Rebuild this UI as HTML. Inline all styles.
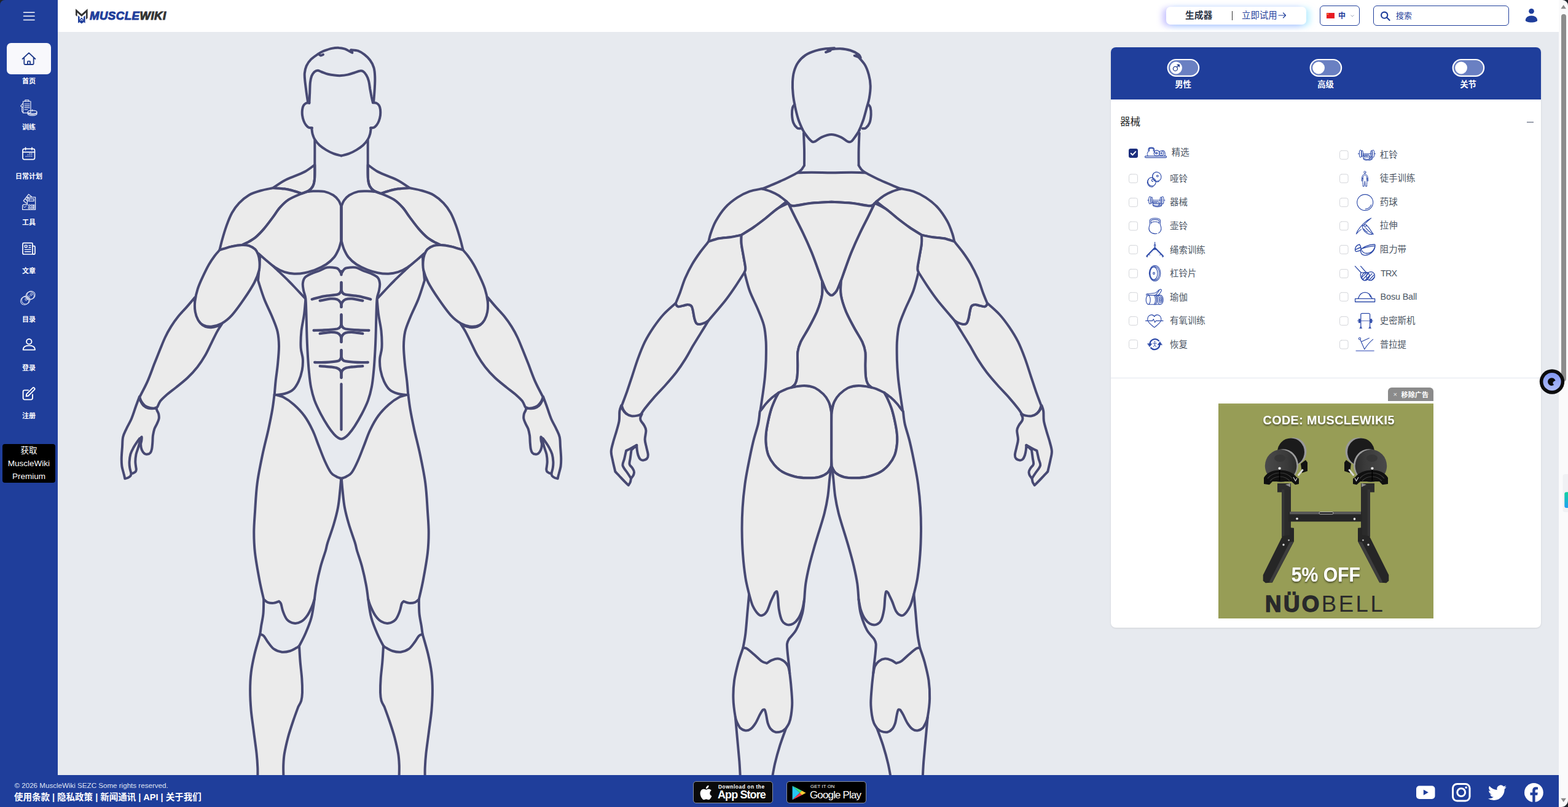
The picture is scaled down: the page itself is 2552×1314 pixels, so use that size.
<!DOCTYPE html>
<html lang="zh"><head><meta charset="utf-8"><title>MuscleWiki</title>
<style>
*{box-sizing:border-box;margin:0;padding:0}
html,body{width:2552px;height:1314px;overflow:hidden;background:#e7eaef;font-family:"Liberation Sans","Noto Sans CJK SC",sans-serif;}
body{position:relative}
.abs{position:absolute}
#sidebar{left:0;top:0;width:94px;height:1314px;background:#1f3e9b}
#header{left:94px;top:0;width:2443px;height:52px;background:#fff}
#footer{left:0;top:1262px;width:2537px;height:52px;background:#1f3e9b}
#scroll{left:2537px;top:0;width:15px;height:1314px;background:#fafafb}
#thumb{left:2540.500px;top:23px;width:8.500px;height:598px;background:#8c8c8c;border-radius:4.500px}
.nav{left:0;width:94px;text-align:center;color:#fff;font-size:11px;font-weight:bold;line-height:13px}
.ml{fill:none;stroke:#474973;stroke-width:4;stroke-linecap:round;stroke-linejoin:round}
.mf{fill:#ebebeb;stroke:#474973;stroke-width:4;stroke-linecap:round;stroke-linejoin:round}
#panel{left:1808px;top:77px;width:700px;height:945px;background:#fff;border-radius:8px;box-shadow:0 1px 3px rgba(0,0,0,.10);overflow:hidden}
#phead{left:0;top:0;width:700px;height:85px;background:#1f3e9b}
.lb{font-size:14.4px;line-height:20px;color:#4b5563;white-space:nowrap}
</style></head><body>
<svg class="abs" style="left:0;top:0" width="2552" height="1314" viewBox="0 0 2552 1314">
<g id="fhf">
<path class="mf" d="M420.0 456.7C421.7 461.7 426.1 476.7 430.0 486.7C433.9 496.7 439.7 507.8 443.3 516.7C446.9 525.6 449.9 532.2 451.7 540.0C453.4 547.8 453.9 554.4 454.0 563.3C454.1 572.2 452.9 583.9 452.0 593.3C451.1 602.8 449.6 611.7 448.7 620.0C447.8 628.3 447.0 639.4 446.7 643.3C449.4 642.9 458.3 642.5 463.3 641.0C468.4 639.5 473.1 637.9 476.8 634.5C480.6 631.2 483.5 626.1 486.0 620.8C488.4 615.5 490.5 608.7 491.7 602.6C492.8 596.5 493.2 590.4 492.8 584.3C492.5 578.2 490.0 573.7 489.6 566.1C489.2 558.4 489.6 547.8 490.5 538.7C491.5 529.5 494.0 520.0 495.1 511.3C496.2 502.6 497.0 490.7 497.4 486.6C495.1 484.2 488.3 476.9 483.7 472.0C479.1 467.2 476.2 463.8 470.0 457.7C463.8 451.5 454.4 442.7 446.7 435.3C438.9 427.9 427.2 417.0 423.3 413.3L423.3 412.7C423.2 415.6 422.9 422.7 422.3 430.0C421.8 437.3 420.4 452.2 420.0 456.7Z"/>
<path class="mf" d="M512.3 268.3C509.9 270.1 502.7 275.7 497.6 278.7C492.5 281.6 487.5 283.4 481.7 285.9C475.9 288.4 469.2 290.5 462.9 293.9C456.6 297.2 447.2 304.1 444.1 306.1C447.2 306.4 457.1 306.7 462.9 307.6C468.7 308.4 474.1 309.9 478.8 311.2C483.5 312.5 489.0 314.5 491.1 315.1C492.9 314.4 498.9 312.7 501.9 310.8C504.9 308.8 507.5 306.4 509.1 303.3C510.8 300.1 511.5 297.5 512.0 291.7C512.6 285.9 512.3 272.2 512.3 268.3Z"/>
<path class="mf" d="M444.1 306.1C440.7 306.9 430.4 308.6 423.9 310.5C417.3 312.4 410.8 314.3 405.1 317.7C399.3 321.1 393.7 325.9 389.2 330.7C384.6 335.5 381.0 340.6 377.6 346.6C374.2 352.6 371.6 359.6 368.9 366.9C366.3 374.1 363.6 383.2 361.7 390.0C359.8 396.7 358.1 404.5 357.3 407.3C360.5 406.4 370.1 403.0 376.1 401.6C382.2 400.2 390.6 399.4 393.5 399.0C394.9 398.3 398.6 397.0 402.2 395.1C405.8 393.1 410.6 390.8 415.2 387.1C419.8 383.4 424.8 378.2 429.6 372.6C434.5 367.1 439.8 359.6 444.1 353.9C448.4 348.1 451.3 342.8 455.7 337.9C460.0 333.1 464.2 328.7 470.1 324.9C476.0 321.1 487.6 316.7 491.1 315.1C489.0 314.5 483.5 312.5 478.8 311.2C474.1 309.9 468.7 308.4 462.9 307.6C457.1 306.7 447.2 306.4 444.1 306.1Z"/>
<path class="mf" d="M491.1 315.1C492.9 314.6 498.2 312.6 501.9 311.9C505.7 311.3 509.1 311.2 513.5 311.2C517.8 311.2 523.1 310.8 527.9 311.9C532.8 313.0 538.5 315.3 542.4 317.7C546.3 320.1 549.0 323.5 551.1 326.4C553.2 329.3 554.4 333.6 555.1 335.1L555.1 392.9C554.4 395.1 552.9 401.6 551.1 405.9C549.2 410.2 547.2 414.8 543.8 418.9C540.5 423.0 535.9 427.1 530.8 430.5C525.8 433.8 519.3 436.9 513.5 439.1C507.7 441.4 501.9 443.1 496.1 444.2C490.4 445.3 484.3 445.9 478.8 445.7C473.2 445.4 468.2 444.6 462.9 442.8C457.6 441.0 452.0 438.1 447.0 434.8C441.9 431.6 437.0 427.0 432.5 423.2C428.1 419.5 422.3 414.2 420.2 412.4L420.2 414.6C419.4 413.1 417.7 408.3 415.2 405.9C412.6 403.5 408.7 401.3 405.1 400.1C401.4 399.0 395.4 399.2 393.5 399.0C394.9 398.3 398.6 397.0 402.2 395.1C405.8 393.1 410.6 390.8 415.2 387.1C419.8 383.4 424.8 378.2 429.6 372.6C434.5 367.1 439.8 359.6 444.1 353.9C448.4 348.1 451.3 342.8 455.7 337.9C460.0 333.1 464.2 328.7 470.1 324.9C476.0 321.1 487.6 316.7 491.1 315.1Z"/>
<path class="mf" d="M317.4 484.0C315.2 486.6 308.5 494.6 303.9 499.9C299.2 505.3 293.7 510.6 289.5 515.9C285.2 521.2 281.7 526.3 278.3 531.9C274.8 537.5 271.6 543.3 268.7 549.5C265.8 555.6 263.6 561.5 260.7 568.6C257.8 575.8 254.6 583.8 251.1 592.6C247.7 601.4 243.9 612.4 239.9 621.4C235.9 630.4 229.3 642.4 227.2 646.6C227.7 647.9 228.9 651.8 230.4 654.1C231.8 656.4 233.6 658.8 235.9 660.5C238.3 662.2 242.1 663.5 244.7 664.2C247.4 664.9 250.0 664.8 251.9 664.5C253.8 664.2 255.5 662.9 256.2 662.6C257.0 661.0 258.4 656.5 260.7 653.3C263.1 650.2 266.0 647.5 270.3 643.7C274.6 640.0 280.4 635.7 286.3 631.0C292.1 626.2 299.6 620.6 305.4 615.0C311.3 609.4 316.6 603.5 321.4 597.4C326.2 591.3 330.5 584.6 334.2 578.2C337.9 571.8 340.6 565.4 343.8 559.1C347.0 552.7 350.5 545.2 353.4 539.9C356.3 534.6 360.0 529.2 361.4 527.1C360.0 527.8 356.3 530.1 353.4 531.1C350.5 532.1 347.0 533.0 343.8 533.2C340.6 533.3 337.1 533.0 334.2 531.9C331.3 530.8 328.5 529.0 326.2 526.3C324.0 523.6 322.0 519.8 320.6 515.9C319.2 512.1 318.5 507.1 317.9 503.1C317.3 499.1 317.2 495.1 317.1 492.0C317.0 488.8 317.4 485.3 317.4 484.0Z"/>
<path class="mf" d="M357.3 407.3C360.5 406.4 370.1 403.0 376.1 401.6C382.2 400.2 388.7 399.2 393.5 399.0C398.3 398.7 401.4 399.0 405.1 400.1C408.7 401.3 412.6 403.5 415.2 405.9C417.7 408.3 419.0 411.2 420.2 414.6C421.4 417.9 422.2 421.9 422.4 426.1C422.6 430.4 423.1 434.4 421.7 440.0C420.3 445.7 418.1 452.2 414.0 460.0C409.9 467.8 403.4 477.8 397.3 486.7C391.2 495.6 383.4 506.7 377.3 513.3C371.2 520.0 366.2 523.6 360.7 526.7C355.1 529.7 349.0 531.2 344.0 531.7C339.0 532.1 334.3 531.2 330.7 529.3C327.1 527.5 324.5 524.3 322.3 520.7C320.2 517.0 318.5 512.3 317.7 507.3C316.8 502.3 316.7 496.8 317.3 490.7C318.0 484.6 319.6 477.3 321.7 470.7C323.8 464.0 326.9 457.3 330.0 450.7C333.1 444.0 336.8 436.3 340.0 430.7C343.2 425.0 346.4 420.6 349.3 416.7C352.2 412.8 356.0 408.9 357.3 407.3Z"/>
<path class="mf" d="M227.0 645.8C226.1 648.3 223.7 654.6 221.5 660.5C219.4 666.3 216.9 674.9 214.2 681.2C211.6 687.5 208.0 693.1 205.7 698.2C203.4 703.3 201.3 706.7 200.2 711.6C199.1 716.5 199.4 721.8 199.0 727.4C198.6 733.1 197.9 740.4 197.8 745.7C197.7 751.0 197.8 754.8 198.4 759.1C199.0 763.4 200.6 767.9 201.4 771.3C202.3 774.6 203.0 777.9 203.3 779.2C204.1 779.0 206.6 778.7 208.1 778.0C209.7 777.3 211.5 776.1 212.4 774.9C213.3 773.8 213.4 771.9 213.6 771.3C214.2 771.1 216.1 770.7 217.3 770.1C218.5 769.5 220.2 768.7 220.9 767.6C221.7 766.6 221.6 764.6 221.8 764.0C221.5 762.0 220.4 755.9 220.3 751.8C220.3 747.7 220.8 743.3 221.5 739.6C222.3 736.0 223.7 732.9 224.6 729.9C225.5 726.8 226.5 723.8 227.0 721.4C227.6 718.9 227.7 716.3 227.9 715.3C228.3 714.6 230.3 711.0 230.7 711.4C231.1 711.8 230.6 715.6 230.3 717.7C230.0 719.8 229.0 721.4 229.1 723.8C229.2 726.2 229.7 729.9 230.7 732.3C231.7 734.8 233.4 737.2 234.9 738.4C236.5 739.6 238.2 739.8 239.8 739.6C241.4 739.4 243.5 738.6 244.7 737.2C245.9 735.8 246.5 733.9 247.1 731.1C247.7 728.3 248.0 723.8 248.3 720.1C248.6 716.5 248.4 712.8 248.9 709.2C249.5 705.5 250.3 701.5 251.4 698.2C252.5 695.0 254.4 692.5 255.6 689.7C256.9 686.8 258.3 683.8 258.7 681.2C259.1 678.5 258.6 676.0 258.1 673.8C257.5 671.7 256.0 669.5 255.4 668.0C254.8 666.5 254.8 665.3 254.7 664.7C253.6 664.8 250.6 665.3 248.3 665.3C246.1 665.3 243.5 665.5 241.0 664.7C238.6 663.9 235.8 662.4 233.7 660.5C231.7 658.5 230.0 655.6 228.8 653.1C227.7 650.7 227.3 647.1 227.0 645.8Z"/>
<path class="mf" d="M446.7 641.7C446.1 645.8 445.0 656.9 443.3 666.7C441.7 676.4 439.3 687.8 436.7 700.0C434.0 712.2 430.3 725.6 427.3 740.0C424.3 754.4 420.7 771.1 418.7 786.7C416.6 802.2 415.9 820.0 415.0 833.3C414.1 846.7 413.3 855.6 413.3 866.7C413.3 877.8 413.5 886.8 415.0 900.0C416.5 913.2 420.2 933.4 422.6 946.1C425.0 958.7 428.1 970.8 429.2 975.8C430.3 976.6 433.1 979.8 435.8 980.8C438.6 981.8 442.7 982.0 445.7 981.8C448.7 981.5 452.6 979.5 454.0 979.1C454.5 979.8 456.2 980.3 457.3 983.1C458.4 985.8 458.9 991.3 460.6 995.6C462.2 999.9 464.2 1005.6 467.2 1008.8C470.2 1012.0 474.9 1014.2 478.8 1014.8C482.6 1015.3 486.7 1014.2 490.3 1012.1C493.9 1010.1 497.3 1006.4 500.2 1002.2C503.1 998.1 505.9 991.8 507.8 987.4C509.8 983.0 511.1 977.7 511.8 975.8C512.3 972.0 513.4 961.5 515.1 952.7C516.7 943.9 519.2 932.3 521.7 922.9C524.2 913.6 528.0 903.1 530.0 896.5C531.9 889.9 531.1 890.5 533.3 883.3C535.6 876.1 540.6 862.8 543.3 853.3C546.1 843.9 548.3 835.6 550.0 826.7C551.7 817.8 552.5 808.0 553.3 800.0C554.2 792.0 554.9 782.2 555.2 778.7C554.6 778.6 553.4 778.5 552.0 778.0C550.6 777.5 549.2 777.2 547.0 775.8C544.8 774.4 541.7 773.9 538.7 769.7C535.6 765.5 532.0 758.0 528.7 750.7C525.3 743.3 522.0 734.1 518.7 725.7C515.3 717.3 512.6 708.4 508.7 700.3C504.8 692.2 500.4 683.9 495.3 677.0C490.3 670.1 483.9 663.7 478.3 658.7C472.7 653.7 466.9 649.7 461.7 647.0C456.4 644.3 449.2 643.1 446.7 642.3Z"/>
<path class="mf" d="M423.3 1032.6C421.8 1038.0 416.8 1054.7 414.3 1065.0C411.9 1075.4 409.9 1084.8 408.7 1094.7C407.5 1104.6 407.1 1114.0 407.1 1124.5C407.1 1134.9 407.7 1145.9 408.7 1157.5C409.8 1169.1 411.9 1182.3 413.3 1193.8C414.8 1205.4 416.6 1217.5 417.6 1226.9C418.6 1236.2 419.0 1242.8 419.3 1250.0C419.6 1257.2 419.3 1266.5 419.3 1269.8L461.6 1269.8C461.5 1266.0 461.0 1253.9 461.2 1246.7C461.5 1239.5 461.6 1234.6 462.9 1226.9C464.2 1219.2 466.5 1209.3 468.8 1200.4C471.2 1191.6 474.3 1182.3 477.1 1174.0C479.9 1165.8 484.0 1154.7 485.4 1150.9C486.2 1149.2 489.2 1144.8 490.3 1141.0C491.4 1137.1 491.8 1133.8 492.0 1127.8C492.1 1121.7 491.9 1112.9 491.3 1104.6C490.8 1096.4 489.4 1087.0 488.7 1078.2C487.9 1069.4 487.3 1056.2 487.0 1051.8C486.2 1052.3 484.5 1053.7 482.1 1055.1C479.6 1056.5 476.0 1058.9 472.1 1060.0C468.3 1061.1 463.3 1062.2 458.9 1061.7C454.5 1061.1 449.6 1059.5 445.7 1056.7C441.9 1054.0 438.6 1048.8 435.8 1045.2C433.1 1041.6 431.3 1037.4 429.2 1035.3C427.1 1033.2 424.2 1033.1 423.3 1032.6Z"/>
</g>
<use href="#fhf" transform="matrix(-1 0 0 1 1111.0 0)"/>
<path class="mf" d="M555.5 445.6C554.8 444.4 552.5 440.3 551.0 438.7C549.5 437.2 549.8 436.7 546.7 436.2C543.6 435.7 536.6 434.8 532.3 435.5C528.0 436.2 525.0 438.8 520.7 440.5C516.3 442.3 510.4 443.8 506.3 445.8C502.2 447.7 498.3 449.4 496.0 452.2C493.8 454.9 493.1 458.6 492.8 462.2C492.5 465.8 493.4 469.6 494.2 473.6C495.0 477.6 496.7 479.9 497.4 486.2C498.1 492.5 498.2 502.5 498.5 511.3C498.8 520.0 499.0 530.7 499.2 538.7C499.4 546.7 499.6 552.3 499.9 559.2C500.2 566.1 500.5 572.3 501.0 580.0C501.5 587.6 502.0 596.7 502.9 605.1C503.7 613.4 504.5 622.3 506.1 630.2C507.6 638.0 509.3 644.8 512.0 652.1C514.7 659.4 518.4 666.8 522.0 673.8C525.6 680.7 530.1 688.3 533.7 693.8C537.3 699.4 540.9 703.9 543.7 707.1C546.5 710.3 548.6 711.7 550.6 713.0C552.5 714.3 553.9 714.8 555.5 714.8C557.1 714.8 558.5 714.3 560.4 713.0C562.4 711.7 564.5 710.3 567.3 707.1C570.1 703.9 573.7 699.4 577.3 693.8C580.9 688.3 585.4 680.7 589.0 673.8C592.6 666.8 596.3 659.4 599.0 652.1C601.7 644.8 603.4 638.0 604.9 630.2C606.5 622.3 607.3 613.4 608.1 605.1C609.0 596.7 609.5 587.6 610.0 580.0C610.5 572.3 610.8 566.1 611.1 559.2C611.4 552.3 611.6 546.7 611.8 538.7C612.0 530.7 612.2 520.0 612.5 511.3C612.8 502.5 612.9 492.5 613.6 486.2C614.3 479.9 616.0 477.6 616.8 473.6C617.6 469.6 618.5 465.8 618.2 462.2C617.9 458.6 617.2 454.9 615.0 452.2C612.7 449.4 608.8 447.7 604.7 445.8C600.6 443.8 594.7 442.3 590.3 440.5C586.0 438.8 583.0 436.2 578.7 435.5C574.4 434.8 567.4 435.7 564.3 436.2C561.2 436.7 561.5 437.2 560.0 438.7C558.5 440.3 556.2 444.4 555.5 445.6Z"/>
<g id="fhl">
<path class="ml" d="M512.3 228.3C512.3 233.6 512.4 249.4 512.3 260.0C512.3 270.6 512.6 284.5 512.0 291.7C511.5 298.9 510.8 300.1 509.1 303.3C507.5 306.4 504.9 308.8 501.9 310.8C498.9 312.7 492.9 314.4 491.1 315.1"/>
<path class="ml" d="M213.6 771.3C213.2 769.7 211.7 764.8 211.2 761.5C210.7 758.3 210.4 755.5 210.6 751.8C210.8 748.1 211.4 743.3 212.4 739.6C213.4 736.0 214.9 733.1 216.7 729.9C218.4 726.6 221.0 722.8 222.8 720.1C224.5 717.5 226.6 714.9 227.4 713.8"/>
<path class="ml" d="M429.2 975.8C429.1 979.7 429.2 991.8 428.5 998.9C427.9 1006.1 426.1 1013.1 425.2 1018.8C424.4 1024.4 423.6 1030.3 423.3 1032.6"/>
<path class="ml" d="M511.8 975.8C511.0 980.8 509.3 996.2 506.8 1005.5C504.4 1014.9 500.2 1024.3 496.9 1032.0C493.6 1039.7 488.7 1048.5 487.0 1051.8"/>
</g>
<use href="#fhl" transform="matrix(-1 0 0 1 1111.0 0)"/>
<path class="ml" d="M501.1 166.5C500.7 163.9 499.6 156.8 498.8 151.2C498.1 145.7 497.1 138.3 496.5 133.0C496.0 127.6 495.4 123.6 495.8 119.3C496.2 115.0 497.1 110.9 498.8 107.1C500.6 103.3 503.1 99.7 506.4 96.4C509.7 93.1 516.6 88.8 518.6 87.3C519.1 87.8 520.4 90.1 521.7 90.4C522.9 90.6 525.2 89.1 525.9 88.8"/>
<path class="ml" d="M520.1 86.5C521.4 85.9 524.5 84.0 527.8 82.7C531.0 81.5 535.9 79.7 539.9 78.9C544.0 78.1 548.6 77.7 552.1 77.9C555.7 78.0 558.4 78.8 561.2 79.7C564.0 80.6 566.8 82.5 568.8 83.5C570.9 84.5 572.7 85.4 573.4 85.8L571.1 81.2C573.0 81.5 578.9 81.5 582.5 82.7C586.2 84.0 589.9 86.3 593.2 88.8C596.5 91.4 599.8 94.4 602.3 98.0C604.9 101.5 607.1 105.8 608.4 110.1C609.7 114.5 610.0 118.5 610.2 123.8C610.5 129.2 610.3 135.0 609.9 142.1C609.6 149.2 608.4 162.4 608.1 166.5"/>
<path class="ml" d="M503.4 168.0C503.5 165.2 503.9 156.8 504.2 151.2C504.4 145.7 504.4 139.1 504.9 134.5C505.4 129.9 506.1 126.8 507.2 123.8C508.3 120.9 510.1 118.5 511.8 117.0C513.4 115.5 515.2 114.7 517.1 114.7C519.0 114.7 520.4 116.0 523.2 117.0C526.0 118.0 530.3 119.9 533.8 120.8C537.4 121.7 540.9 122.2 544.5 122.6C548.0 123.0 551.6 123.3 555.1 123.1C558.7 122.9 562.3 122.3 565.8 121.6C569.4 120.8 573.2 119.5 576.5 118.5C579.8 117.5 583.2 115.8 585.6 115.5C588.0 115.1 589.1 115.1 590.9 116.2C592.7 117.4 594.7 119.8 596.2 122.3C597.8 124.9 599.0 127.6 600.0 131.4C601.1 135.3 601.6 140.8 602.3 145.1C603.1 149.5 603.9 153.6 604.6 157.3C605.4 161.0 606.5 165.6 606.9 167.2"/>
<path class="ml" d="M503.4 167.2C502.5 167.3 499.6 167.2 498.1 168.0C496.5 168.7 495.0 170.0 494.0 171.8C492.9 173.6 492.3 176.0 492.0 178.6C491.7 181.3 491.6 184.7 492.0 187.8C492.4 190.8 493.3 194.2 494.3 196.9C495.3 199.6 496.7 202.0 498.1 203.7C499.5 205.5 501.0 206.8 502.6 207.6C504.3 208.3 507.1 208.2 508.0 208.3"/>
<path class="ml" d="M607.6 167.2C608.5 167.3 611.4 167.2 612.9 168.0C614.5 168.7 616.0 170.0 617.0 171.8C618.1 173.6 618.7 176.0 619.0 178.6C619.3 181.3 619.4 184.7 619.0 187.8C618.6 190.8 617.7 194.2 616.7 196.9C615.7 199.6 614.3 202.0 612.9 203.7C611.5 205.5 610.0 206.8 608.4 207.6C606.7 208.3 603.9 208.2 603.0 208.3"/>
<path class="ml" d="M507.2 208.3C507.5 210.0 507.8 215.0 508.7 218.2C509.6 221.4 510.6 224.3 512.5 227.3C514.4 230.4 517.1 233.7 520.1 236.5C523.2 239.3 527.0 241.8 530.8 244.1C534.6 246.4 538.9 248.6 543.0 250.2C547.0 251.7 553.1 253.0 555.1 253.5"/>
<path class="ml" d="M603.8 208.3C603.5 210.0 603.2 215.0 602.3 218.2C601.4 221.4 600.4 224.3 598.5 227.3C596.6 230.4 593.9 233.7 590.9 236.5C587.8 239.3 584.0 241.8 580.2 244.1C576.4 246.4 572.1 248.6 568.0 250.2C564.0 251.7 557.9 253.0 555.9 253.5"/>
<g id="fha" style="stroke-width:4.3">
<path class="ml" style="stroke-width:4.3" d="M555.5 459.9C555.5 461.8 555.8 468.6 555.5 471.3C555.2 474.1 554.8 475.0 553.7 476.4C552.5 477.7 553.1 478.6 548.7 479.6C544.2 480.6 533.9 481.0 527.1 482.3C520.2 483.6 510.9 486.5 507.7 487.3"/>
<path class="ml" style="stroke-width:4.3" d="M520.7 489.6C523.6 489.1 533.8 486.8 538.5 486.4C543.1 486.1 546.2 486.6 548.7 487.5C551.3 488.5 552.8 490.4 553.9 491.9C555.0 493.4 555.2 495.1 555.5 496.4C555.8 497.8 555.5 499.3 555.5 499.9"/>
<path class="ml" style="stroke-width:4.3" d="M555.5 512.4C555.5 514.9 555.8 523.9 555.5 527.3C555.2 530.6 554.8 530.9 553.7 532.3C552.5 533.6 553.1 534.6 548.7 535.5C544.2 536.3 533.4 537.1 527.1 537.5C520.7 537.9 513.4 537.9 510.6 538.0"/>
<path class="ml" style="stroke-width:4.3" d="M520.7 543.2C523.6 542.9 533.8 541.1 538.5 540.9C543.1 540.8 546.2 541.2 548.7 542.1C551.3 543.0 552.8 544.7 553.9 546.2C555.0 547.7 555.2 549.4 555.5 551.2C555.8 553.0 555.5 556.0 555.5 556.9"/>
<path class="ml" style="stroke-width:4.3" d="M555.5 570.2C555.5 571.8 555.8 577.7 555.5 580.2C555.2 582.7 554.8 583.9 553.7 585.2C552.5 586.6 552.7 587.4 548.7 588.2C544.6 589.0 535.4 589.7 529.3 590.0C523.3 590.3 515.1 590.0 512.2 590.0"/>
<path class="ml" style="stroke-width:4.3" d="M520.7 596.2C523.6 596.4 533.8 597.0 538.5 597.5C543.1 598.1 546.2 598.4 548.7 599.4C551.3 600.3 552.8 601.8 553.9 603.2C555.0 604.7 555.2 606.3 555.5 608.3C555.8 610.2 555.5 614.0 555.5 615.1"/>
</g>
<use href="#fha" transform="matrix(-1 0 0 1 1111.0 0)"/>
<path class="ml" style="stroke-width:4.3" d="M555.5 625.4L555.5 699.6"/>
<path class="ml" style="stroke-width:4.3" d="M555.5 441.7L555.5 447.4"/>
<g id="bhf">
<path class="mf" d="M1240.0 307.3C1236.7 308.1 1226.7 309.3 1220.0 311.7C1213.3 314.1 1206.7 317.2 1200.0 321.7C1193.3 326.1 1185.8 331.9 1180.0 338.3C1174.2 344.7 1168.9 353.1 1165.0 360.0C1161.1 366.9 1158.6 374.4 1156.7 380.0C1154.7 385.6 1153.9 391.1 1153.3 393.3C1156.1 392.5 1163.9 389.6 1170.0 388.3C1176.1 387.1 1183.9 386.9 1190.0 386.0C1196.1 385.1 1203.9 383.2 1206.7 382.7C1210.0 380.6 1220.0 374.6 1226.7 370.0C1233.3 365.4 1240.3 360.0 1246.7 355.0C1253.1 350.0 1259.4 344.4 1265.0 340.0C1270.6 335.6 1277.5 330.3 1280.0 328.3C1278.3 326.7 1273.9 321.3 1270.0 318.3C1266.1 315.4 1261.7 312.5 1256.7 310.7C1251.7 308.8 1242.8 307.9 1240.0 307.3Z"/>
<path class="mf" d="M1099.9 493.6C1096.5 496.6 1085.9 505.4 1079.9 512.0C1073.9 518.5 1069.0 525.3 1063.9 532.7C1058.8 540.2 1053.8 548.2 1049.5 556.7C1045.3 565.2 1041.8 574.5 1038.3 583.9C1034.9 593.2 1031.7 603.8 1028.8 612.6C1025.8 621.4 1023.6 628.6 1020.8 636.6C1018.0 644.6 1013.4 656.5 1012.0 660.5C1012.5 661.9 1013.4 666.0 1015.2 668.5C1016.9 671.1 1019.7 674.0 1022.4 675.7C1025.0 677.4 1028.5 678.6 1031.2 678.9C1033.8 679.2 1036.3 678.1 1038.3 677.3C1040.4 676.5 1042.6 674.7 1043.5 674.1C1044.5 672.7 1046.1 669.7 1049.5 665.3C1052.9 660.9 1058.3 654.1 1063.9 647.8C1069.5 641.4 1077.0 633.9 1083.1 627.0C1089.2 620.1 1095.3 613.1 1100.7 606.2C1106.0 599.3 1110.5 592.6 1115.0 585.4C1119.6 578.3 1123.6 570.3 1127.8 563.1C1132.1 555.9 1136.3 549.2 1140.6 542.3C1144.9 535.4 1151.2 525.0 1153.4 521.5C1152.3 522.2 1149.4 524.5 1147.0 525.5C1144.6 526.6 1141.3 527.8 1139.0 527.9C1136.7 528.1 1134.9 527.9 1133.4 526.3C1131.9 524.7 1131.1 521.8 1130.2 518.3C1129.3 514.9 1128.6 508.9 1127.8 505.6C1127.0 502.2 1126.8 500.0 1125.4 498.4C1124.1 496.8 1122.1 496.1 1119.8 496.0C1117.6 495.8 1114.5 497.0 1111.8 497.6C1109.2 498.1 1105.7 499.4 1103.9 499.2C1102.0 499.0 1101.3 497.4 1100.7 496.5C1100.0 495.5 1100.0 494.1 1099.9 493.6Z"/>
<path class="mf" d="M1153.3 393.3C1151.1 396.1 1144.4 403.9 1140.0 410.0C1135.6 416.1 1130.8 422.8 1126.7 430.0C1122.5 437.2 1118.3 445.6 1115.0 453.3C1111.7 461.1 1109.2 470.0 1106.7 476.7C1104.1 483.4 1101.0 490.8 1099.9 493.6C1100.0 494.1 1100.0 495.5 1100.7 496.5C1101.3 497.4 1102.0 499.0 1103.9 499.2C1105.7 499.4 1109.2 498.1 1111.8 497.6C1114.5 497.0 1117.6 495.8 1119.8 496.0C1122.1 496.1 1124.1 496.8 1125.4 498.4C1126.8 500.0 1127.0 502.2 1127.8 505.6C1128.6 508.9 1129.3 514.9 1130.2 518.3C1131.1 521.8 1131.9 524.7 1133.4 526.3C1134.9 527.9 1136.7 528.1 1139.0 527.9C1141.3 527.8 1144.6 526.6 1147.0 525.5C1149.4 524.5 1152.3 522.2 1153.4 521.5C1157.8 516.3 1172.8 499.1 1180.0 490.0C1187.2 480.9 1191.4 474.4 1196.7 466.7C1201.9 458.9 1209.2 447.2 1211.7 443.3C1211.9 442.2 1213.6 441.1 1213.3 436.7C1213.1 432.2 1211.1 423.3 1210.0 416.7C1208.9 410.0 1207.2 402.3 1206.7 396.7C1206.1 391.0 1206.7 385.0 1206.7 382.7C1203.9 383.2 1196.1 385.1 1190.0 386.0C1183.9 386.9 1176.1 387.1 1170.0 388.3C1163.9 389.6 1156.1 392.5 1153.3 393.3Z"/>
<path class="mf" d="M1011.2 660.2C1010.7 661.7 1009.0 665.2 1008.4 669.4C1007.8 673.5 1008.5 679.7 1007.7 685.2C1006.8 690.7 1004.9 696.4 1003.3 702.2C1001.6 708.1 999.2 715.0 997.8 720.5C996.4 726.0 994.8 730.3 994.7 735.1C994.6 740.0 996.1 744.3 997.2 749.8C998.3 755.2 1000.7 765.0 1001.4 768.0C1003.2 769.8 1008.2 775.3 1011.8 779.0C1015.3 782.7 1020.9 788.3 1022.8 790.2C1023.3 789.3 1025.1 786.9 1025.8 785.1C1026.5 783.2 1026.8 780.0 1027.0 779.0C1027.6 778.2 1029.8 775.9 1030.7 774.1C1031.5 772.3 1032.3 770.1 1032.0 768.0C1031.8 766.0 1030.3 764.0 1029.1 761.9C1027.9 759.9 1025.1 758.5 1024.6 755.8C1024.0 753.2 1025.3 750.0 1025.8 746.1C1026.3 742.2 1027.3 734.9 1027.6 732.7L1036.2 724.8C1036.3 726.1 1036.4 730.0 1036.8 732.7C1037.2 735.4 1037.7 738.7 1038.6 741.2C1039.5 743.8 1040.8 746.6 1042.2 747.9C1043.7 749.3 1045.3 749.6 1047.1 749.4C1048.9 749.1 1052.0 747.9 1053.2 746.3C1054.5 744.8 1054.9 743.1 1054.7 740.0C1054.5 736.9 1052.8 731.9 1052.0 727.8C1051.1 723.8 1049.7 720.1 1049.6 715.6C1049.5 711.2 1051.6 704.9 1051.4 701.0C1051.2 697.2 1049.7 695.1 1048.3 692.5C1047.0 689.9 1044.1 687.2 1043.1 685.2C1042.1 683.2 1042.0 682.1 1042.2 680.3C1042.5 678.5 1044.3 675.2 1044.7 674.2C1043.3 674.7 1039.0 676.4 1036.2 676.9C1033.3 677.4 1030.5 677.8 1027.6 677.3C1024.8 676.7 1021.4 675.3 1019.1 673.6C1016.8 671.9 1014.9 669.2 1013.6 666.9C1012.3 664.7 1011.6 661.3 1011.2 660.2Z"/>
<path class="mf" d="M1206.7 382.7C1210.0 380.6 1220.0 374.6 1226.7 370.0C1233.3 365.4 1240.3 360.0 1246.7 355.0C1253.1 350.0 1258.9 344.1 1265.0 340.0C1271.1 335.9 1280.0 332.2 1283.0 330.7C1284.8 334.4 1289.9 345.1 1294.0 353.3C1298.1 361.6 1302.9 370.6 1307.3 380.0C1311.8 389.4 1316.8 400.6 1320.7 410.0C1324.6 419.4 1327.8 428.8 1330.7 436.7C1333.6 444.6 1336.8 453.9 1338.0 457.3C1338.0 461.1 1339.3 471.8 1338.0 480.0C1336.7 488.2 1333.6 497.8 1330.0 506.7C1326.4 515.6 1321.1 525.0 1316.7 533.3C1312.2 541.7 1306.4 550.0 1303.3 556.7C1300.3 563.3 1299.2 566.7 1298.3 573.3C1297.5 580.0 1298.5 589.7 1298.3 596.7C1298.2 603.6 1298.0 610.3 1297.3 615.0C1296.7 619.7 1295.9 622.3 1294.3 625.0C1292.8 627.7 1289.1 630.0 1288.0 631.0C1285.6 632.1 1278.0 634.8 1273.3 637.3C1268.7 639.8 1264.4 642.3 1260.0 646.0C1255.6 649.7 1250.6 654.8 1246.7 659.3C1242.8 663.9 1238.3 671.0 1236.7 673.3C1237.5 667.8 1240.3 650.0 1241.7 640.0C1243.1 630.0 1244.2 622.2 1245.0 613.3C1245.8 604.4 1246.4 596.1 1246.7 586.7C1246.9 577.2 1247.2 566.1 1246.7 556.7C1246.1 547.2 1245.6 538.9 1243.3 530.0C1241.1 521.1 1237.2 512.8 1233.3 503.3C1229.4 493.9 1223.6 483.3 1220.0 473.3C1216.4 463.3 1213.1 448.3 1211.7 443.3C1211.9 442.2 1213.6 441.1 1213.3 436.7C1213.1 432.2 1211.1 423.3 1210.0 416.7C1208.9 410.0 1207.2 402.3 1206.7 396.7C1206.1 391.0 1206.7 385.0 1206.7 382.7Z"/>
<path class="mf" d="M1288.0 631.0C1289.2 630.6 1290.8 629.1 1295.0 628.7C1299.2 628.2 1307.5 627.7 1313.3 628.3C1319.2 629.0 1325.3 630.4 1330.0 632.7C1334.7 634.9 1338.4 637.9 1341.7 641.7C1344.9 645.4 1347.4 650.0 1349.3 655.0C1351.2 660.0 1352.5 668.9 1353.1 671.7C1353.2 675.3 1353.3 684.2 1353.3 693.3C1353.3 702.5 1353.3 717.8 1353.3 726.7C1353.3 735.6 1353.4 741.1 1353.3 746.7C1353.2 752.2 1352.9 757.8 1352.8 760.0L1352.7 760.0C1351.7 761.7 1349.9 767.2 1346.7 770.0C1343.4 772.8 1338.9 775.3 1333.3 776.7C1327.8 778.1 1320.0 778.4 1313.3 778.3C1306.7 778.2 1300.0 777.7 1293.3 776.0C1286.7 774.3 1278.9 771.6 1273.3 768.3C1267.8 765.1 1263.8 761.1 1260.0 756.7C1256.2 752.2 1252.9 747.2 1250.7 741.7C1248.4 736.1 1247.3 729.2 1246.7 723.3C1246.0 717.5 1246.1 712.8 1246.7 706.7C1247.2 700.6 1248.6 693.3 1250.0 686.7C1251.4 680.0 1253.1 672.8 1255.0 666.7C1256.9 660.6 1259.6 654.6 1261.7 650.0C1263.7 645.4 1266.4 641.1 1267.3 639.3C1269.4 638.3 1276.6 634.7 1280.0 633.3C1283.4 631.9 1286.7 631.4 1288.0 631.0Z"/>
<path class="mf" d="M1236.7 670.0C1236.2 673.3 1235.8 681.7 1234.0 690.0C1232.2 698.3 1228.4 708.3 1225.7 720.0C1222.9 731.7 1219.5 748.6 1217.3 760.0C1215.1 771.4 1213.9 777.4 1212.4 788.5C1210.9 799.6 1209.4 813.9 1208.6 826.6C1207.8 839.3 1207.5 851.9 1207.6 864.6C1207.7 877.3 1208.1 890.0 1209.1 902.7C1210.0 915.4 1211.6 929.9 1213.3 940.7C1215.0 951.5 1218.2 963.1 1219.2 967.5C1220.2 970.6 1222.5 980.5 1224.8 985.7C1227.2 990.9 1230.6 996.2 1233.1 998.9C1235.6 1001.7 1237.2 1002.8 1239.7 1002.2C1242.2 1001.7 1245.5 999.5 1248.0 995.6C1250.5 991.8 1252.4 984.2 1254.6 979.1C1256.8 974.0 1260.1 967.5 1261.2 965.2C1261.7 964.9 1263.7 962.0 1264.5 963.3C1265.3 964.5 1265.6 967.7 1266.1 972.5C1266.7 977.3 1266.7 986.0 1267.8 992.3C1268.9 998.7 1270.5 1006.4 1272.8 1010.5C1275.0 1014.6 1278.0 1016.3 1281.0 1017.1C1284.0 1017.9 1287.9 1017.1 1290.9 1015.4C1293.9 1013.8 1296.7 1011.0 1299.2 1007.2C1301.7 1003.3 1304.1 997.6 1305.8 992.3C1307.4 987.1 1308.5 978.6 1309.1 975.8C1309.5 971.5 1310.0 959.2 1311.3 950.2C1312.6 941.2 1314.8 931.2 1317.0 921.7C1319.2 912.2 1321.9 902.7 1324.6 893.2C1327.3 883.7 1330.3 874.1 1333.2 864.6C1336.1 855.1 1339.3 845.6 1341.7 836.1C1344.1 826.6 1346.0 817.1 1347.4 807.6C1348.8 798.1 1349.4 786.9 1350.3 779.0C1351.2 771.1 1352.3 763.2 1352.7 760.0C1351.7 761.7 1349.9 767.2 1346.7 770.0C1343.4 772.8 1338.9 775.3 1333.3 776.7C1327.8 778.1 1320.0 778.4 1313.3 778.3C1306.7 778.2 1300.0 777.7 1293.3 776.0C1286.7 774.3 1278.9 771.6 1273.3 768.3C1267.8 765.1 1263.8 761.1 1260.0 756.7C1256.2 752.2 1252.9 747.2 1250.7 741.7C1248.4 736.1 1247.3 729.2 1246.7 723.3C1246.0 717.5 1246.1 712.8 1246.7 706.7C1247.2 700.6 1248.6 693.3 1250.0 686.7C1251.4 680.0 1253.1 672.8 1255.0 666.7C1256.9 660.6 1259.6 654.6 1261.7 650.0C1263.7 645.4 1266.4 641.1 1267.3 639.3C1265.6 640.7 1260.1 644.3 1256.7 647.3C1253.2 650.3 1249.4 654.2 1246.7 657.3C1243.9 660.4 1241.7 663.9 1240.0 666.0C1238.3 668.1 1237.2 669.3 1236.7 670.0Z"/>
<path class="mf" d="M1209.3 1055.1C1208.1 1058.9 1204.1 1069.4 1201.7 1078.2C1199.4 1087.0 1196.5 1098.0 1195.1 1107.9C1193.7 1117.9 1193.2 1127.8 1193.5 1137.7C1193.7 1147.6 1195.7 1160.8 1196.8 1167.4C1197.9 1174.0 1199.5 1175.7 1200.1 1177.3C1200.9 1178.7 1202.8 1183.5 1205.0 1185.6C1207.2 1187.6 1210.5 1189.3 1213.3 1189.5C1216.0 1189.8 1218.8 1189.3 1221.5 1187.2C1224.3 1185.2 1227.3 1181.2 1229.8 1177.3C1232.3 1173.5 1234.5 1167.7 1236.4 1164.1C1238.3 1160.5 1240.5 1157.2 1241.4 1155.9C1241.9 1155.9 1243.7 1154.5 1244.7 1155.9C1245.6 1157.2 1246.2 1160.5 1247.0 1164.1C1247.8 1167.7 1248.4 1173.5 1249.6 1177.3C1250.9 1181.2 1252.4 1184.8 1254.6 1187.2C1256.8 1189.7 1259.8 1191.6 1262.8 1192.2C1265.9 1192.7 1270.0 1191.6 1272.8 1190.5C1275.5 1189.4 1278.3 1186.4 1279.4 1185.6C1280.2 1184.2 1282.9 1180.9 1284.3 1177.3C1285.7 1173.7 1286.8 1169.6 1287.6 1164.1C1288.4 1158.6 1289.3 1152.0 1289.3 1144.3C1289.3 1136.6 1288.3 1125.8 1287.6 1117.9C1287.0 1109.9 1285.7 1100.0 1285.3 1096.4C1284.9 1094.5 1284.2 1088.1 1282.7 1084.8C1281.1 1081.5 1278.8 1078.6 1276.1 1076.6C1273.3 1074.5 1269.4 1072.9 1266.1 1072.6C1262.8 1072.3 1259.3 1073.7 1256.2 1074.9C1253.2 1076.1 1249.4 1079.0 1248.0 1079.9C1246.6 1079.3 1243.3 1079.0 1239.7 1076.6C1236.1 1074.1 1230.6 1068.5 1226.5 1065.0C1222.4 1061.5 1217.8 1057.4 1214.9 1055.8C1212.1 1054.1 1210.3 1055.2 1209.3 1055.1Z"/>
</g>
<use href="#bhf" transform="matrix(-1 0 0 1 2706.6 0)"/>
<path class="mf" d="M1353.3 281.3C1347.9 281.2 1329.9 280.7 1320.7 280.7C1311.4 280.7 1301.8 281.2 1298.0 281.3C1294.0 283.3 1281.9 289.7 1274.0 293.3C1266.1 297.0 1256.2 301.0 1250.7 303.3C1245.1 305.7 1242.3 306.7 1240.7 307.3C1242.9 308.1 1249.6 309.8 1254.0 311.7C1258.4 313.5 1262.9 315.6 1267.3 318.3C1271.8 321.1 1278.4 326.7 1280.7 328.3C1281.3 329.2 1283.0 332.2 1284.7 333.3C1286.3 334.5 1289.7 335.0 1290.7 335.3C1295.7 334.6 1310.2 331.8 1320.7 330.7C1331.1 329.6 1347.9 329.0 1353.3 328.7L1353.3 328.7C1358.7 329.0 1375.5 329.6 1385.9 330.7C1396.4 331.8 1410.9 334.6 1415.9 335.3C1416.9 335.0 1420.3 334.5 1421.9 333.3C1423.6 332.2 1425.3 329.2 1425.9 328.3C1428.2 326.7 1434.8 321.1 1439.3 318.3C1443.7 315.6 1448.2 313.5 1452.6 311.7C1457.0 309.8 1463.7 308.1 1465.9 307.3C1464.3 306.7 1461.5 305.7 1455.9 303.3C1450.4 301.0 1440.5 297.0 1432.6 293.3C1424.7 289.7 1412.6 283.3 1408.6 281.3C1404.8 281.2 1395.2 280.7 1385.9 280.7C1376.7 280.7 1358.7 281.2 1353.3 281.3Z"/>
<path class="mf" d="M1353.3 328.7C1347.9 329.0 1331.1 329.6 1320.7 330.7C1310.2 331.8 1296.9 335.3 1290.7 335.3C1284.4 335.3 1284.3 331.4 1283.0 330.7C1284.8 334.4 1289.9 345.1 1294.0 353.3C1298.1 361.6 1302.9 370.6 1307.3 380.0C1311.8 389.4 1316.8 400.6 1320.7 410.0C1324.6 419.4 1327.8 428.8 1330.7 436.7C1333.6 444.6 1335.7 451.2 1338.0 457.3C1340.3 463.4 1342.6 469.6 1344.7 473.3C1346.8 477.1 1349.2 478.8 1350.7 480.0C1352.1 481.2 1352.9 480.6 1353.3 480.7L1353.3 480.7C1353.7 480.6 1354.5 481.2 1355.9 480.0C1357.4 478.8 1359.8 477.1 1361.9 473.3C1364.0 469.6 1366.3 463.4 1368.6 457.3C1370.9 451.2 1373.0 444.6 1375.9 436.7C1378.8 428.8 1382.0 419.4 1385.9 410.0C1389.8 400.6 1394.8 389.4 1399.3 380.0C1403.7 370.6 1408.5 361.6 1412.6 353.3C1416.7 345.1 1421.8 334.4 1423.6 330.7C1422.3 331.4 1422.2 335.3 1415.9 335.3C1409.7 335.3 1396.4 331.8 1385.9 330.7C1375.5 329.6 1358.7 329.0 1353.3 328.7Z"/>
<path class="mf" d="M1353.3 480.7C1352.9 480.6 1352.1 481.2 1350.7 480.0C1349.2 478.8 1346.8 477.1 1344.7 473.3C1342.6 469.6 1339.1 460.0 1338.0 457.3C1338.0 461.1 1339.3 471.8 1338.0 480.0C1336.7 488.2 1333.6 497.8 1330.0 506.7C1326.4 515.6 1321.1 525.0 1316.7 533.3C1312.2 541.7 1306.4 550.0 1303.3 556.7C1300.3 563.3 1299.2 566.7 1298.3 573.3C1297.5 580.0 1298.5 589.7 1298.3 596.7C1298.2 603.6 1298.0 610.3 1297.3 615.0C1296.7 619.7 1295.9 622.3 1294.3 625.0C1292.8 627.7 1289.1 630.0 1288.0 631.0C1290.0 630.6 1295.8 629.1 1300.0 628.7C1304.2 628.2 1308.9 627.8 1313.3 628.3C1317.8 628.8 1322.2 629.4 1326.7 631.7C1331.1 633.9 1336.4 638.1 1340.0 641.7C1343.6 645.3 1346.3 649.4 1348.3 653.3C1350.4 657.2 1351.5 661.7 1352.3 665.0C1353.2 668.3 1353.1 671.9 1353.3 673.3C1353.5 671.9 1353.4 668.3 1354.3 665.0C1355.1 661.7 1356.2 657.2 1358.3 653.3C1360.3 649.4 1363.0 645.3 1366.6 641.7C1370.2 638.1 1375.5 633.9 1379.9 631.7C1384.4 629.4 1388.8 628.8 1393.3 628.3C1397.7 627.8 1402.4 628.2 1406.6 628.7C1410.8 629.1 1416.6 630.6 1418.6 631.0C1417.5 630.0 1413.8 627.7 1412.3 625.0C1410.7 622.3 1409.9 619.7 1409.3 615.0C1408.6 610.3 1408.4 603.6 1408.3 596.7C1408.1 589.7 1409.1 580.0 1408.3 573.3C1407.4 566.7 1406.3 563.3 1403.3 556.7C1400.2 550.0 1394.4 541.7 1389.9 533.3C1385.5 525.0 1380.2 515.6 1376.6 506.7C1373.0 497.8 1369.9 488.2 1368.6 480.0C1367.3 471.8 1368.6 461.1 1368.6 457.3C1367.5 460.0 1364.0 469.6 1361.9 473.3C1359.8 477.1 1357.4 478.8 1355.9 480.0C1354.5 481.2 1353.7 480.6 1353.3 480.7Z"/>
<g id="bhl">
<path class="ml" d="M1308.0 216.7C1308.2 221.1 1308.8 234.6 1309.0 243.3C1309.2 252.1 1309.0 265.0 1309.0 269.3"/>
<path class="ml" d="M1309.0 269.3C1308.2 270.6 1305.8 274.7 1304.0 276.7C1302.2 278.7 1299.0 280.6 1298.0 281.3"/>
<path class="ml" d="M1027.0 779.0C1026.1 777.6 1023.8 773.9 1021.5 770.5C1019.3 767.0 1014.5 762.1 1013.6 758.3C1012.7 754.4 1015.1 751.4 1016.1 747.3C1017.0 743.3 1018.6 736.1 1019.1 733.9C1020.3 733.3 1023.6 731.8 1026.4 730.3C1029.3 728.7 1034.5 725.7 1036.2 724.8"/>
<path class="ml" d="M1219.2 967.5C1218.8 972.2 1217.6 984.9 1216.6 995.6C1215.6 1006.4 1214.5 1022.1 1213.3 1032.0C1212.1 1041.9 1210.0 1051.2 1209.3 1055.1"/>
<path class="ml" d="M1309.1 975.8C1308.5 979.7 1308.0 990.7 1305.8 998.9C1303.6 1007.2 1299.5 1018.5 1295.9 1025.4C1292.3 1032.2 1286.8 1036.4 1284.3 1040.2C1281.8 1044.1 1281.4 1044.4 1281.0 1048.5C1280.6 1052.6 1281.5 1058.9 1282.0 1065.0C1282.6 1071.1 1283.8 1079.6 1284.3 1084.8C1284.9 1090.1 1285.1 1094.5 1285.3 1096.4"/>
<path class="ml" d="M1196.8 1167.4C1197.3 1173.5 1199.0 1191.6 1200.1 1203.8C1201.2 1215.9 1202.5 1229.1 1203.4 1240.1C1204.2 1251.1 1204.8 1264.9 1205.0 1269.8"/>
<path class="ml" d="M1279.4 1185.6C1277.7 1190.3 1272.5 1204.0 1269.4 1213.7C1266.4 1223.3 1263.4 1234.0 1261.2 1243.4C1259.0 1252.8 1257.1 1265.4 1256.2 1269.8"/>
</g>
<use href="#bhl" transform="matrix(-1 0 0 1 2706.6 0)"/>
<path class="ml" d="M1305.7 210.0C1304.6 207.2 1300.9 199.4 1299.0 193.3C1297.1 187.2 1295.4 180.0 1294.0 173.3C1292.6 166.7 1291.3 160.0 1290.7 153.3C1290.0 146.7 1289.7 139.4 1290.0 133.3C1290.3 127.2 1290.8 121.9 1292.3 116.7C1293.8 111.4 1295.9 106.1 1299.0 101.7C1302.1 97.2 1305.9 93.2 1310.7 90.0C1315.4 86.8 1321.8 84.4 1327.3 82.7C1332.9 80.9 1338.9 80.1 1344.0 79.3C1349.1 78.6 1355.7 78.5 1358.0 78.3L1344.0 85.0L1351.3 82.7"/>
<path class="ml" d="M1347.3 80.7C1350.7 80.4 1361.2 79.1 1367.3 79.3C1373.4 79.6 1379.0 80.4 1384.0 82.0C1389.0 83.6 1394.6 86.7 1397.3 88.7C1400.1 90.7 1400.1 93.1 1400.7 94.0L1390.7 90.7"/>
<path class="ml" d="M1394.0 89.3C1396.2 91.9 1404.0 99.6 1407.3 105.0C1410.7 110.4 1412.4 115.8 1414.0 121.7C1415.6 127.5 1416.6 133.6 1416.7 140.0C1416.8 146.4 1415.7 154.2 1414.7 160.0C1413.7 165.8 1412.2 169.4 1410.7 175.0C1409.2 180.6 1407.3 188.1 1405.7 193.3C1404.0 198.6 1401.9 203.4 1400.7 206.7C1399.4 209.9 1398.4 211.7 1398.0 212.7"/>
<path class="ml" d="M1293.3 170.0C1292.8 170.8 1290.7 172.2 1290.0 175.0C1289.3 177.8 1288.8 182.5 1289.0 186.7C1289.2 190.8 1289.9 196.4 1291.3 200.0C1292.7 203.6 1295.4 206.8 1297.3 208.3C1299.2 209.9 1301.8 209.2 1302.7 209.3"/>
<path class="ml" d="M1413.3 170.0C1413.8 170.8 1415.9 172.2 1416.6 175.0C1417.3 177.8 1417.8 182.5 1417.6 186.7C1417.4 190.8 1416.7 196.4 1415.3 200.0C1413.9 203.6 1411.2 206.8 1409.3 208.3C1407.4 209.9 1404.8 209.2 1403.9 209.3"/>
<path class="ml" d="M1305.7 210.0C1306.5 211.4 1308.3 215.1 1310.7 218.3C1313.1 221.6 1317.5 227.3 1320.0 229.3C1322.5 231.4 1322.8 231.7 1325.7 230.7C1328.6 229.7 1332.8 225.3 1337.3 223.3C1341.9 221.4 1347.8 219.0 1353.0 219.0C1358.2 219.0 1364.2 221.4 1368.7 223.3C1373.2 225.3 1377.1 229.6 1380.0 230.7C1382.9 231.8 1383.8 231.6 1386.0 230.0C1388.2 228.4 1390.8 224.1 1393.0 221.0C1395.2 217.9 1398.0 213.2 1399.0 211.7"/>
</svg>
<div id="sidebar" class="abs">
<svg class="abs" style="left:0;top:0" width="94" height="800" viewBox="0 0 94 800" fill="none" stroke="#fff" stroke-width="1.6" stroke-linecap="round" stroke-linejoin="round">
<!-- hamburger -->
<path d="M38.5 20.2H56M38.5 26.3H56M38.5 32.4H56" stroke-width="1.5"/>
<!-- home button -->
<rect x="11" y="70" width="72" height="51" rx="7" fill="#f8f8fc" stroke="none"/>
<path d="M36.5 96 47 86.2 57.5 96M39.3 93.8V103.6a1.4 1.4 0 0 0 1.4 1.4H53.3a1.4 1.4 0 0 0 1.4-1.4V93.8M45 105v-4.6a.8.8 0 0 1 .8-.8h2.4a.8.8 0 0 1 .8.8V105" stroke="#1f3a8a" stroke-width="1.8"/>
<!-- training icon: clipboard + weights -->
<g stroke-width="1.15" stroke="#e9ecf7">
<path d="M37.600 165h12.400v18.800H37.600zM41 162.800h5.600l.8 2.400H40.200zM40 169.200h8M40 172.300h8M40 175.400h8M40 178.500h5"/>
<path d="M37.400 168.200l-3.800 4.600 3 1.600M35.600 174.400v6.800l2 2.400"/>
<ellipse cx="52.600" cy="182.400" rx="7.400" ry="2.500"/><path d="M45.200 182.400v3.200c0 1.400 3.300 2.500 7.400 2.500s7.400-1.100 7.400-2.500v-3.200M45.200 184.200c.6 1.200 3.600 2.100 7.400 2.100s6.800-.900 7.400-2.100"/>
<path d="M52.600 178.600v2.400"/>
</g>
<!-- calendar -->
<g stroke-width="1.7">
<rect x="37" y="242.3" width="19.5" height="17.4" rx="2.6"/><path d="M37 247.6H56.500M41.600 240.400v3.400M52 240.400v3.400"/>
<path d="M42 254.600h1M45 254.600h1M48 254.600h1M51 254.600h1M45 252h1M48 252h1M51 252h1M48 249.800h1M51 249.800h1" stroke-width="1"/>
</g>
<!-- tools -->
<g stroke-width="1.25" stroke="#e9ecf7">
<path d="M44.400 321h13.200v20.400H36.600v-5.400c0-1.600 1.200-2.800 2.800-2.800h5z"/>
<path d="M47 323.800h8.200v3.600H47z"/>
<path d="M46.600 333.400h2.400v2.400h-2.400zM51 333.400h2.400v2.400H51zM46.600 337.400h2.400v2.400h-2.400zM51 337.400h2.400v2.400H51zM55 333.400h1v6.400h-1z" stroke-width="1"/>
<path d="M38.600 336.400l1.600 1.600 2.600-2.600" stroke-width="1"/>
<path d="M46.600 316.400l4.600 3.600-1 1.200M46.600 316.400l-8.400 10.600 5 4M40.800 323.800l4.600 3.600M43.400 320.400l4.600 3.600"/>
</g>
<!-- article/newspaper -->
<g stroke-width="1.7">
<path d="M37 397.200a1.600 1.600 0 0 1 1.600-1.600H51.400a1.600 1.600 0 0 1 1.600 1.600V412a2 2 0 0 0 2 2H39a2 2 0 0 1-2-2z"/>
<path d="M53 400.600h2.400a1.600 1.600 0 0 1 1.600 1.600V412a2 2 0 0 1-2 2"/>
<path d="M40.400 399.400h3.600v3.400h-3.600zM47 399.800h3M47 403h3M40.400 406.400h9.600M40.400 409.800h9.600" stroke-width="1.4"/>
</g>
<!-- dumbbell catalog -->
<g stroke-width="1" stroke="#e6e9f5">
<ellipse cx="50.500" cy="480.500" rx="6.800" ry="6.400" transform="rotate(-30 50.500 480.500)"/>
<ellipse cx="48.800" cy="481.600" rx="6.800" ry="6.400" transform="rotate(-30 48.800 481.600)"/>
<circle cx="50.800" cy="479.600" r="1.700"/>
<ellipse cx="42" cy="488.600" rx="6.800" ry="6.400" transform="rotate(-30 42 488.600)"/>
<ellipse cx="40.200" cy="489.800" rx="6.800" ry="6.400" transform="rotate(-30 40.200 489.800)"/>
<circle cx="42.600" cy="487.400" r="1.700"/>
<path d="M44 483.400l2.600 2.200M46.400 481l2.400 2.400"/>
</g>
<!-- user -->
<g stroke-width="1.9">
<circle cx="47.300" cy="556.200" r="4.200"/>
<path d="M37.600 569.600c0-4.600 4-7 9.700-7s9.700 2.400 9.700 7z"/>
</g>
<!-- edit -->
<g stroke-width="1.9">
<path d="M46 635.400h-6a2.400 2.400 0 0 0-2.400 2.400v10.400a2.400 2.400 0 0 0 2.400 2.400h10.600a2.400 2.400 0 0 0 2.400-2.400v-5.800"/>
<path d="M43.200 641.600l9.800-9.800a2 2 0 0 1 2.900 2.900l-9.800 9.800-3.500.7z"/>
</g>
<!-- premium -->
<rect x="4" y="723" width="86" height="63" rx="4" fill="#000" stroke="none"/>
</svg>
<div class="abs nav cj" style="top:126px">首页</div>
<div class="abs nav cj" style="top:201px">训练</div>
<div class="abs nav cj" style="top:281px">日常计划</div>
<div class="abs nav cj" style="top:356px">工具</div>
<div class="abs nav cj" style="top:435px">文章</div>
<div class="abs nav cj" style="top:514px">目录</div>
<div class="abs nav cj" style="top:593px">登录</div>
<div class="abs nav cj" style="top:671px">注册</div>
<div class="abs" style="left:4px;top:723px;width:86px;text-align:center;color:#fff;font-size:13.5px;line-height:21px;padding-top:0px"><span class="cj">获取</span><br>MuscleWiki<br>Premium</div>
<svg class="abs" style="left:0;top:0" width="12" height="12"><path d="M0 0h8a8 8 0 0 0-8 8z" fill="#20242c"/></svg><svg class="abs" style="left:0;top:1302px" width="12" height="12"><path d="M0 12h10a10 10 0 0 1-10-10z" fill="#20242c"/></svg>
</div>

<div id="header" class="abs">
<!-- logo -->
<svg class="abs" style="left:28px;top:12px" width="24" height="28" viewBox="0 0 24 28">
<path d="M1 2.2 10.8 11 20.6 2.2V17.5l-2.6 2.200V8.600L10.800 15 3.600 8.600V15L1 12.800z" fill="#333"/>
<path d="M5 13.200l2.600 2.400v4.600l3.200-3.600 3.200 3.600v-4.600l2.600-2.400V25.800l-2.400-1.800-3.400 2.400-3.400-2.400L5 25.800z M7.600 22.200l3.200-1.400 3.200 1.400-3.200-3.200z" fill="#1f3e9b" fill-rule="evenodd"/>
</svg>
<div class="abs" id="logot" style="left:52px;top:14px;font-size:18.5px;line-height:24px;font-weight:bold;font-style:italic;letter-spacing:0.55px;color:#1f3e9b;-webkit-text-stroke:1px #1f3e9b;white-space:nowrap">MUSCLE<span style="color:#333;-webkit-text-stroke:1px #333">WIKI</span></div>
<!-- generator pill -->
<div class="abs" style="left:1804px;top:11px;width:228px;height:29px;border-radius:7px;background:#fff;box-shadow:-7px 2px 10px rgba(167,150,255,.45),7px 2px 10px rgba(150,235,255,.5),0 3px 8px rgba(170,200,255,.35)"></div>
<div class="abs cj" style="left:1835px;top:14px;font-size:14.8px;line-height:22px;font-weight:bold;color:#2c3547;white-space:nowrap">生成器</div>
<div class="abs" style="left:1911px;top:17.5px;width:1px;height:15px;background:#333"></div>
<div class="abs cj" style="left:1927px;top:14px;font-size:14.4px;line-height:22px;color:#1f3e9b;white-space:nowrap">立即试用</div>
<svg class="abs" style="left:1986px;top:19px" width="14" height="12" viewBox="0 0 14 12" fill="none" stroke="#1f3e9b" stroke-width="1.2" stroke-linecap="round" stroke-linejoin="round"><path d="M1 6h11.500M8.500 2l4 4-4 4"/></svg>
<!-- language -->
<div class="abs" style="left:2054px;top:9px;width:65px;height:33px;border:1.3px solid #1f3e9b;border-radius:6px"></div>
<div class="abs" style="left:2065px;top:21px;width:12.6px;height:9px;background:#e81c24"></div>
<div class="abs" style="left:2066px;top:22px;width:2.4px;height:2.4px;background:#ffd43b;border-radius:50%"></div>
<div class="abs cj" style="left:2084px;top:16px;font-size:12px;line-height:20px;font-weight:bold;color:#1f3e9b">中</div>
<svg class="abs" style="left:2103px;top:23px" width="8" height="6" viewBox="0 0 8 6" fill="none" stroke="#9aa3b5" stroke-width="1"><path d="M1.500 1.500 4 4l2.500-2.500"/></svg>
<!-- search -->
<div class="abs" style="left:2141px;top:9px;width:221px;height:33px;border:1.3px solid #1f3e9b;border-radius:6px"></div>
<svg class="abs" style="left:2151px;top:16px" width="20" height="20" viewBox="0 0 20 20" fill="none" stroke="#1f3e9b" stroke-width="2.1" stroke-linecap="round"><circle cx="8.2" cy="8.7" r="5.1"/><path d="M12.200 12.600 16.600 17"/></svg>
<div class="abs cj" style="left:2178px;top:16px;font-size:12.9px;line-height:20px;color:#1f3e9b;white-space:nowrap">搜索</div>
<!-- user -->
<svg class="abs" style="left:2386px;top:12px" width="26" height="28" viewBox="0 0 26 28" fill="#1f3e9b"><circle cx="12.5" cy="6.2" r="4.3"/><path d="M2.800 21.600c0-5.200 4.400-8 9.700-8s9.700 2.800 9.700 8c0 1.400-4.600 3-9.700 3s-9.700-1.600-9.700-3z"/></svg>
</div>

<div id="panel" class="abs"><div id="phead" class="abs"></div>
<div class="abs cj" style="left:15px;top:109px;font-size:16.5px;line-height:24px;color:#222;white-space:nowrap">器械</div>
<div class="abs" style="left:677px;top:121.4px;width:11px;height:1.4px;background:#9aa0ad"></div>
<div class="abs cj" style="left:77.6px;top:52.2px;width:80px;text-align:center;font-size:13.4px;line-height:18px;font-weight:bold;color:#fff">男性</div>
<div class="abs cj" style="left:309.6px;top:52.2px;width:80px;text-align:center;font-size:13.4px;line-height:18px;font-weight:bold;color:#fff">高级</div>
<div class="abs cj" style="left:541.6px;top:52.2px;width:80px;text-align:center;font-size:13.4px;line-height:18px;font-weight:bold;color:#fff">关节</div>
<div class="abs lb cj" style="left:98.8px;top:161.3px">精选</div>
<div class="abs lb cj" style="left:96.1px;top:203.5px">哑铃</div>
<div class="abs lb cj" style="left:96.1px;top:241.8px">器械</div>
<div class="abs lb cj" style="left:96.1px;top:280.8px">壶铃</div>
<div class="abs lb cj" style="left:96.1px;top:319.7px">绳索训练</div>
<div class="abs lb cj" style="left:96.1px;top:357.8px">杠铃片</div>
<div class="abs lb cj" style="left:96.1px;top:397.0px">瑜伽</div>
<div class="abs lb cj" style="left:96.1px;top:434.6px">有氧训练</div>
<div class="abs lb cj" style="left:96.1px;top:473.5px">恢复</div>
<div class="abs lb cj" style="left:437.8px;top:164.5px">杠铃</div>
<div class="abs lb cj" style="left:437.8px;top:203.3px">徒手训练</div>
<div class="abs lb cj" style="left:437.8px;top:242.0px">药球</div>
<div class="abs lb cj" style="left:437.8px;top:280.4px">拉伸</div>
<div class="abs lb cj" style="left:437.8px;top:319.4px">阻力带</div>
<div class="abs lb" style="left:439.0px;top:357.8px;letter-spacing:-0.9px">TRX</div>
<div class="abs lb" style="left:438.6px;top:396.3px;letter-spacing:-0.15px">Bosu Ball</div>
<div class="abs lb cj" style="left:437.8px;top:434.7px">史密斯机</div>
<div class="abs lb cj" style="left:437.8px;top:473.5px">普拉提</div>
<div class="abs" style="left:0;top:537.5px;width:700px;height:1.5px;background:#e2e5ee"></div>
<div class="abs" style="left:451px;top:554.2px;width:74px;height:22px;background:#8b8b8b;border-radius:6px 6px 0 0"></div>
<div class="abs cj" style="left:472.6px;top:557.5px;font-size:11.1px;line-height:16px;font-weight:bold;color:#fff;white-space:nowrap">移除广告</div>
<div class="abs" style="left:459.6px;top:557.0px;font-size:11px;line-height:16px;color:#e8e8e8">×</div>
<svg class="abs" style="left:175px;top:580px" width="350" height="350" viewBox="0 0 350 350">
<defs>
<filter id="ts" x="-10%" y="-30%" width="120%" height="170%"><feGaussianBlur in="SourceAlpha" stdDeviation="1.600"/><feOffset dx="0" dy="1.500"/><feComponentTransfer><feFuncA type="linear" slope=".55"/></feComponentTransfer><feMerge><feMergeNode/><feMergeNode in="SourceGraphic"/></feMerge></filter>
<linearGradient id="dg" x1="0" y1="0" x2="1" y2="0"><stop offset="0" stop-color="#4a4a4a"/><stop offset=".7" stop-color="#3a3a3a"/><stop offset="1" stop-color="#2c2c2c"/></linearGradient>
<g id="db">
<!-- back disc -->
<ellipse cx="122" cy="78" rx="21.500" ry="22.600" fill="#9a9a9a"/>
<ellipse cx="118" cy="79" rx="22" ry="22.600" fill="#1b1b1b"/>
<!-- rear cradle -->
<path d="M134 98l8-6 3 4v14l-9 3z" fill="#121212"/>
<path d="M128.500 116.500l8-10 2.200 1.800-8 10z" fill="#d9d9d9"/>
<!-- front disc -->
<ellipse cx="105.500" cy="100.500" rx="24.500" ry="26.200" fill="#9c9c9c"/>
<ellipse cx="101.600" cy="101.500" rx="25.800" ry="26.400" fill="url(#dg)"/>
<ellipse cx="100" cy="89" rx="9" ry="6" fill="#333" opacity=".7"/>
<circle cx="99.600" cy="105.600" r="2.200" fill="#e4e4e4"/>
<!-- cradle -->
<path d="M74 121c4-8 14-12.500 26-12.500s22 4.500 27 11l4 3v8.500l-6 1.200-6-5.200H88l-5 5.200-9-1.200z" fill="#101010"/>
<path d="M80 122c5-6 12-9 20-9s15 3 20 9M84 126c4-4.500 9.500-7 16-7s12 2.500 16 7" fill="none" stroke="#3a3a3a" stroke-width="1.200"/>
<path d="M99.600 108v18" stroke="#000" stroke-width="1.600"/>
<path d="M122 120l3.500 6 2.500-4.500" fill="none" stroke="#cfcfcf" stroke-width="1.200"/>
<!-- bracket + post -->
<path d="M96 130h22v14.500H96z" fill="#2d2d2d"/>
<path d="M109 132l8-2v6z" fill="#8f8f8f"/>
<path d="M103 140h15V217h-15z" fill="#2b2b2b"/>
<path d="M103 140h4.500V217H103z" fill="#353535"/>
<!-- leg -->
<path d="M104.200 216 116 214v-12l7 .800v21.600L87.800 291.600 76.800 292.300 72.700 288.800V279.200z" fill="#262626"/>
<path d="M116 226l6.500-1.500L87.800 291.600l-5-1z" fill="#3d3d3d"/>
<circle cx="106" cy="230" r="1.700" fill="#ddd"/><circle cx="114.600" cy="222.600" r="1.400" fill="#bbb"/>
</g>
</defs>
<rect width="350" height="350" fill="#979d56"/>
<rect width="350" height="3" fill="#9ba15b"/>
<use href="#db"/>
<use href="#db" transform="matrix(-1 0 0 1 350 0)"/>
<!-- cross bar -->
<rect x="114" y="176.300" width="120" height="16" fill="#262626"/>
<rect x="116" y="176.300" width="116" height="4" fill="#5a5a5a"/>
<rect x="164" y="176.600" width="23" height="3.600" rx="1.800" fill="#222" stroke="#ddd" stroke-width=".8"/>
<circle cx="128" cy="187.600" r="1.900" fill="#ddd"/><circle cx="221.500" cy="188" r="1.900" fill="#ddd"/>
<!-- texts -->
<g font-family="Liberation Sans, sans-serif" font-weight="bold">
<text x="179.700" y="34.300" text-anchor="middle" font-size="19.700" letter-spacing=".45" fill="#fff" filter="url(#ts)">CODE: MUSCLEWIKI5</text>
<text x="0" y="0" text-anchor="middle" font-size="33.900" fill="#fff" filter="url(#ts)" transform="translate(174.800 289.500) scale(.89 1)">5% OFF</text>
<text x="76" y="338.900" font-size="36.600" letter-spacing="3.500" fill="#29292b"><tspan stroke="#29292b" stroke-width="1.500">NÜO</tspan><tspan font-weight="normal">BELL</tspan></text>
</g>
</svg>

</div>
<svg class="abs" style="left:1808px;top:77px" width="700" height="560" viewBox="1808 77 700 560" fill="none" stroke="#2b48a8" stroke-width="1.1" stroke-linecap="round" stroke-linejoin="round">
<rect x="1900.7" y="97" width="50.4" height="26.8" rx="13.4" fill="#6a80c2" stroke="#fff" stroke-width="2.2"/>
<circle cx="1914.1" cy="110.5" r="9.9" fill="#fff" stroke="none"/>
<rect x="2132.7" y="97" width="50.4" height="26.8" rx="13.4" fill="#6a80c2" stroke="#fff" stroke-width="2.2"/>
<circle cx="2146.1" cy="110.5" r="9.9" fill="#fff" stroke="none"/>
<rect x="2364.7" y="97" width="50.4" height="26.8" rx="13.4" fill="#6a80c2" stroke="#fff" stroke-width="2.2"/>
<circle cx="2378.1" cy="110.5" r="9.9" fill="#fff" stroke="none"/>
<g stroke="#1f3a8a" stroke-width="1.3"><circle cx="1912.9" cy="111.9" r="3.5"/><path d="M1915.500 109.300 1919.200 105.600M1916 105.500h3.300v3.300"/></g>
<rect x="1837" y="241.9" width="15" height="15" rx="3" fill="#1c2f7e" stroke="none"/>
<path d="M1840.800 249.800l2.500 2.600 4.900-5.300" stroke="#fff" stroke-width="2"/>
<rect x="1837.500" y="283.7" width="14" height="14" rx="3" fill="#fff" stroke="#d4d6da" stroke-width="1"/>
<rect x="1837.500" y="322.6" width="14" height="14" rx="3" fill="#fff" stroke="#d4d6da" stroke-width="1"/>
<rect x="1837.500" y="361.0" width="14" height="14" rx="3" fill="#fff" stroke="#d4d6da" stroke-width="1"/>
<rect x="1837.500" y="399.4" width="14" height="14" rx="3" fill="#fff" stroke="#d4d6da" stroke-width="1"/>
<rect x="1837.500" y="438.3" width="14" height="14" rx="3" fill="#fff" stroke="#d4d6da" stroke-width="1"/>
<rect x="1837.500" y="476.3" width="14" height="14" rx="3" fill="#fff" stroke="#d4d6da" stroke-width="1"/>
<rect x="1837.500" y="515.6" width="14" height="14" rx="3" fill="#fff" stroke="#d4d6da" stroke-width="1"/>
<rect x="1837.500" y="553.5" width="14" height="14" rx="3" fill="#fff" stroke="#d4d6da" stroke-width="1"/>
<rect x="2180.500" y="245.3" width="13.600" height="14" rx="3" fill="#fff" stroke="#d4d6da" stroke-width="1"/>
<rect x="2180.500" y="283.7" width="13.600" height="14" rx="3" fill="#fff" stroke="#d4d6da" stroke-width="1"/>
<rect x="2180.500" y="322.6" width="13.600" height="14" rx="3" fill="#fff" stroke="#d4d6da" stroke-width="1"/>
<rect x="2180.500" y="360.8" width="13.600" height="14" rx="3" fill="#fff" stroke="#d4d6da" stroke-width="1"/>
<rect x="2180.500" y="399.4" width="13.600" height="14" rx="3" fill="#fff" stroke="#d4d6da" stroke-width="1"/>
<rect x="2180.500" y="438.5" width="13.600" height="14" rx="3" fill="#fff" stroke="#d4d6da" stroke-width="1"/>
<rect x="2180.500" y="476.3" width="13.600" height="14" rx="3" fill="#fff" stroke="#d4d6da" stroke-width="1"/>
<rect x="2180.500" y="515.6" width="13.600" height="14" rx="3" fill="#fff" stroke="#d4d6da" stroke-width="1"/>
<rect x="2180.500" y="554.0" width="13.600" height="14" rx="3" fill="#fff" stroke="#d4d6da" stroke-width="1"/>
<!-- L1 featured -->
<g><rect x="1863.500" y="254.100" width="35" height="2.500" rx="1.200"/>
<path d="M1868.200 254c-1.500-2-1.400-5.200.8-7.200.3-2.200-.4-3.400.3-4.800.8-1.600 2.400-2 4.500-2s3.700.4 4.500 2c.7 1.400 0 2.600.3 4.800 1 .9 1.500 1.800 1.700 2.800M1870.500 246c-.2-1.800-.4-3 .2-3.800.6-.7 1.700-.8 3.100-.8s2.500.1 3.100.8c.6.800.4 2 .2 3.800"/>
<circle cx="1882.600" cy="249.400" r="4.500"/><circle cx="1882.600" cy="249.400" r="1.300"/>
<circle cx="1890.200" cy="249.400" r="3.700"/><circle cx="1890.200" cy="249.400" r="1.100"/>
<path d="M1886.300 246.300h1M1892.500 245c1.800.2 3.300 1.200 3.600 4.400.2 2-.1 3.600-.4 4.600M1890.200 245.700h2.300"/></g>
<!-- L2 dumbbell -->
<g><ellipse cx="1882.800" cy="287.600" rx="7" ry="7.600" transform="rotate(-28 1882.800 287.600)"/>
<path d="M1877.700 282.200c-2.400 2.800-2.600 7.200-.4 10.400 2.200 3.200 6 4.200 8.800 2.800"/>
<circle cx="1883.800" cy="286.600" r="1.400"/>
<ellipse cx="1874.600" cy="296" rx="6.400" ry="7" transform="rotate(-28 1874.600 296)"/>
<path d="M1869.200 292.200c-2 2.600-2.200 6.400-.2 9.200 2 2.800 5.400 3.600 8 2.400"/>
<path d="M1877 291.800c-1.400-.4-2.600.600-2.600 1.800s1 2 2.200 1.800M1878.600 293.600l1.200-1.200"/></g>
<!-- L3 machine / barbell (template) -->
<g id="ibb"><path d="M1867.800 326h2M1876 326h12.600M1894 326h2"/>
<ellipse cx="1871.600" cy="326" rx="1.900" ry="6"/><ellipse cx="1874.400" cy="326" rx="1.500" ry="5"/>
<ellipse cx="1892.200" cy="326" rx="1.900" ry="6"/><ellipse cx="1889.600" cy="326" rx="1.500" ry="5"/>
<path d="M1875.600 328.200h9.400l2.400 3.400h-9.600zM1878 329.800h5.400M1876.400 331.600v2.200c0 1.600 3.200 2.800 7.200 2.800s7.200-1.200 7.200-2.800v-1.200M1876.400 333.400c1.200 1 3.800 1.600 7.200 1.600s6-.6 7.200-1.600M1885.600 334l3.600-2.400 1.400 1"/></g>
<!-- L4 kettlebell -->
<g><path d="M1885.600 379.600c3-1.800 4.600-5.200 4.200-8.800-.3-2.400-1.400-4.200-1.600-6 .1-2.200.8-4 .3-6-.7-2.600-4-3.600-8.600-3.600s-7.900 1-8.600 3.600c-.5 2 .2 3.800.3 6-.2 1.800-1.300 3.600-1.600 6-.6 5.200 3.400 9.800 9.900 9.800 1.200 0 2.300-.1 3.300-.4"/>
<path d="M1873.600 364c-.4-2-.8-3.600-.2-4.800.8-1.400 3.200-1.800 6.500-1.800s5.700.4 6.500 1.800c.6 1.200.2 2.800-.2 4.800M1874.200 362.400c1.600-1 3.400-1.400 5.700-1.400s4.100.4 5.700 1.400"/></g>
<!-- L5 cable -->
<g><path d="M1879.600 394.400v8.800"/><ellipse cx="1879.600" cy="399.600" rx="1.100" ry="1.500" fill="#fff"/>
<path d="M1879.600 404l-12.600 13.200M1879.600 404l12.800 13.200" stroke-width="3.200"/>
<path d="M1877.800 407.400l-9.600 10M1881.400 407.400l9.800 10" stroke="#fff" stroke-width="1.200"/>
<path d="M1869.600 413.600l2 2M1889.600 413.600l-2 2" stroke-width=".8"/></g>
<!-- L6 plate -->
<g><ellipse cx="1879.600" cy="445" rx="9.200" ry="12.700"/><ellipse cx="1879.200" cy="445" rx="7.600" ry="11.300"/>
<ellipse cx="1877.800" cy="445" rx="6.200" ry="10.400"/><ellipse cx="1878" cy="445" rx="1.300" ry="1.700"/></g>
<!-- L7 yoga -->
<g><ellipse cx="1888.400" cy="488.200" rx="4.800" ry="7.600"/><ellipse cx="1888.800" cy="488.200" rx="2.600" ry="4.800"/><ellipse cx="1889" cy="488.200" rx="1.100" ry="2.400"/>
<path d="M1888.400 480.600h-19c-2.400 0-4.200 3.400-4.200 7.600s1.800 7.600 4.200 7.600h19M1869.600 480.800c1.600 1.400 2.600 4.200 2.600 7.400s-1 6-2.600 7.400"/>
<path d="M1878.600 480.600c1.200 1.600 2 4.400 2 7.600s-.8 6-2 7.600M1880.800 480.600c1.200 1.600 2 4.400 2 7.600s-.8 6-2 7.600"/>
<path d="M1866.200 481.200c-.8-1.200-.6-2.200.6-2.600 4.600-.4 10.400-.8 14.200-1.800 3.200-1.800 4.600-5.600 7.800-5.800 1.400 0 1.800 1 1.400 2.200-1.400 3.600-4.200 7-7.600 9.600M1868.600 480.400c-.6-.8-.4-1.400.4-1.600M1886.800 473c-1.600 2.400-3.600 5.200-6 7.400"/></g>
<!-- L8 cardio -->
<g><path d="M1867.800 521.600c-.6-4.600 1.600-8.600 6-9 2.400-.2 4.200 1.400 5 3 .8-1.600 2.600-3.200 5-3 4.400.4 6.600 4.400 6 9M1868.800 523.600c1.800 3.400 6 6 10 9.600 4-3.600 8.200-6.200 10-9.600"/>
<path d="M1864.600 522.400h11l1.800-2.800 2.200 5.400 1.600-2.600h11.800"/></g>
<!-- L9 recovery -->
<g><path d="M1871.600 560.400a8.200 8.200 0 0 1 14.200-5.600M1887.400 560.800a8.200 8.200 0 0 1-14.200 5.600" stroke-width="2.300"/>
<path d="M1867.800 559.600l7 .2-3.600 4.800zM1891.200 561.600l-7-.2 3.600-4.800z" fill="#2b48a8" stroke-width=".6"/>
<circle cx="1879.500" cy="556.600" r="1" fill="#2b48a8" stroke="none"/>
<path d="M1876.600 559h5.800M1879.500 559v2.600l-2 3M1879.500 561.600l2 3" stroke-width="1"/></g>
<!-- R1 barbell -->
<use href="#ibb" transform="translate(342.600 -75.800)"/>
<!-- R2 bodyweight -->
<g stroke-width="1"><circle cx="2221.400" cy="280.400" r="1.600"/>
<path d="M2221.400 282.600c-2.800 1.200-4.600 3.800-5 7.200-.3 2.400-.2 4.200.2 5.400.2-2.600.8-5 1.800-6.600.2 3.600-.6 6-.4 9 .1 2 .4 4 .2 5.800h2l1.200-8.600 1.200 8.600h2c-.2-1.800.1-3.800.2-5.800.2-3-.6-5.400-.4-9 1 1.600 1.600 4 1.800 6.600.4-1.200.5-3 .2-5.400-.4-3.400-2.200-6-5-7.200z"/>
<path d="M2218.800 287.600c.6-1.800 1.600-2.600 2.600-2.600s2 .8 2.600 2.600"/></g>
<!-- R3 med ball -->
<g><circle cx="2221.700" cy="329.600" r="13"/><path d="M2231.600 333.600c-1.600 4-5.200 6.400-9.200 6.800"/></g>
<!-- R4 stretch -->
<g><path d="M2231.600 355.200c-6.600 3.200-13.600 9.400-18.400 15.400-2.600 3.200-4.800 6.800-5.800 10.400 2.400-2.800 5-5.400 8-7.600M2231.600 355.200c-4.600 4-9.600 8.400-13 12.400"/>
<circle cx="2221.800" cy="367.600" r="1.800"/>
<path d="M2217.800 366.400c-1.800 4 1.400 9.800 6.200 13 3.200 1.800 6.800 2.600 9.800 2M2223.600 366c3 3 6.600 7.600 8.800 11.400 1 1.800 2.200 3.200 3 4M2222.800 371.200c2.400 3 6.400 6.400 10.400 9.400M2219.600 372.600c1.400 2.200 3.600 4.200 6 5.600"/></g>
<!-- R5 bands -->
<g stroke-width="1.400"><path d="M2212.600 398c-3.600 1-6.600 3.800-7 7.400-.2 2.200.4 4 1.800 4.200l7-1.800c.8-2.600.6-6.600-1.800-9.800zM2206.800 406.200l7-3.200"/>
<path d="M2214.400 407.800c2.800-5.600 13.800-9.800 22.400-9.800.8 0 1.200.4 1.200 1.200.2 8.800-8 16.600-17 16.400-3.600-.2-6.400-2.600-6.600-7.800zM2216 404.800c6.400-2 14.400-3.800 21.400-4.400M2216.400 408c2.200 3.800 5.800 5 10 4.400 4.800-.8 9.400-4.600 11-9.800"/></g>
<!-- R6 TRX -->
<g stroke-width="1.300"><path d="M2205.400 433.400l9.600 10.400M2214.600 433.400l9 10.400"/>
<path d="M2215 443.800h12M2215 443.800c-1.400 3.600-.8 8.600 2.600 11.400 2.400 1.800 5.400 1.600 7.600 0"/>
<ellipse cx="2230.600" cy="449.600" rx="6.600" ry="7.200" transform="rotate(38 2230.600 449.600)"/>
<ellipse cx="2222.600" cy="450" rx="5.800" ry="7" transform="rotate(38 2222.600 450)"/>
<path d="M2216.400 451.600l7.600-7.400M2218 455l9-9.400M2221.600 456.600l7.200-7.600M2226.400 452.600l6.600-7M2228.600 455.800l7.200-7.800M2232.600 456l4.600-5"/></g>
<!-- R7 bosu -->
<g stroke-width="1.300"><rect x="2205.600" y="486.300" width="32" height="5.200"/>
<path d="M2210.400 486.200c2-6.400 6.200-10 11.200-10s9.200 3.600 11.600 10"/>
<path d="M2228.600 480.200c1.400.6 2.600 2 3.200 3.600l-1.400.2c-.4-1.400-1-2.600-1.800-3.800z" fill="#2b48a8" stroke-width=".6"/></g>
<!-- R8 smith -->
<g stroke-width="1.300"><path d="M2214.800 533.400v-21.400a1.600 1.600 0 0 1 1.600-1.600h11.600a1.600 1.600 0 0 1 1.600 1.600v21.400"/>
<path d="M2209.400 522.400h25" stroke-width=".8"/>
<path d="M2211.600 519.600h2.200v5.800h-2.200zM2230.600 519.600h2.200v5.800h-2.200z" fill="#2b48a8" stroke-width=".8"/>
<path d="M2213 534.400l1.800-3.200 1.800 3.200zM2227.800 534.400l1.800-3.200 1.800 3.200z" fill="#2b48a8" stroke-width=".6"/></g>
<!-- R9 pilates -->
<g><path d="M2207.400 571.200h28.400" stroke="#8c9bd6" stroke-width="2"/>
<circle cx="2213" cy="551.400" r="1.600"/>
<path d="M2214 553.200l6.800 15.600M2215.400 556.400l13-5.800M2220.800 568.800c4-6.600 8.600-12.200 13.800-16.200"/></g>

</svg>

<div id="footer" class="abs">
<div class="abs" style="left:23.5px;top:9px;font-size:11.6px;line-height:16px;color:#dfe4f3;white-space:nowrap">© 2026 MuscleWiki SEZC Some rights reserved.</div>
<div class="abs cj" style="left:23px;top:26px;font-size:14.5px;line-height:20px;font-weight:bold;color:#fff;white-space:nowrap">使用条款 | 隐私政策 | 新闻通讯 | API | 关于我们</div>
<!-- app store -->
<div class="abs" style="left:1128px;top:10px;width:130px;height:36px;border-radius:5px;background:#0a0a0a;border:1px solid #8a8f9c"></div>
<svg class="abs" style="left:1135px;top:12.5px" width="29" height="31.400" viewBox="0 0 24 26" fill="#fff"><path d="M16.800 13.600c0-2.400 2-3.600 2.100-3.700-1.100-1.700-2.900-1.900-3.500-1.900-1.500-.2-2.900.9-3.700.9-.8 0-1.900-.9-3.200-.8-1.600 0-3.100.9-3.900 2.400-1.700 2.900-.4 7.200 1.200 9.600.8 1.200 1.800 2.500 3 2.400 1.200 0 1.700-.8 3.100-.8 1.400 0 1.900.8 3.200.8 1.300 0 2.200-1.200 3-2.400.9-1.300 1.300-2.700 1.300-2.700-.1-.1-2.600-1-2.600-3.800zM14.400 6.300c.7-.8 1.100-1.900 1-3.100-1 0-2.200.7-2.900 1.500-.6.7-1.200 1.900-1 3 1.100.1 2.200-.6 2.900-1.400z"/></svg>
<div class="abs" style="left:1169px;top:13.5px;font-size:8.4px;line-height:10px;font-weight:bold;color:#fff;letter-spacing:.55px;white-space:nowrap">Download on the</div>
<div class="abs" style="left:1168px;top:21px;font-size:18px;line-height:22px;font-weight:bold;color:#fff;letter-spacing:-.9px;white-space:nowrap">App Store</div>
<!-- google play -->
<div class="abs" style="left:1280px;top:10px;width:130px;height:36px;border-radius:5px;background:#000;border:1px solid #8a8f9c"></div>
<svg class="abs" style="left:1288px;top:16px" width="26" height="26" viewBox="0 0 26 26"><path d="M1.600 1.400 13.600 13 1.600 24.600z" fill="#26c6f5"/><path d="M1.600 1.400 17.200 9.400 13.600 13z" fill="#3ddc84"/><path d="M1.600 24.600 17.200 16.600 13.600 13z" fill="#ef3b4e"/><path d="M17.200 9.400 23.600 13 17.200 16.600 13.600 13z" fill="#ffcf33"/></svg>
<div class="abs" style="left:1319px;top:14px;font-size:7.8px;line-height:10px;color:#fff;letter-spacing:.1px;white-space:nowrap">GET IT ON</div>
<div class="abs" style="left:1318px;top:22px;font-size:17px;line-height:22px;color:#fff;letter-spacing:-.86px;white-space:nowrap">Google Play</div>
<!-- social -->
<svg class="abs" style="left:2300px;top:8px" width="220" height="40" viewBox="2300 1270 220 40">
<rect x="2305" y="1279.600" width="30.500" height="21.400" rx="5" fill="#fff"/><path d="M2316.800 1285.800v9l8-4.500z" fill="#1f3e9b"/>
<rect x="2364.500" y="1276.500" width="27.500" height="27.500" rx="7" fill="none" stroke="#fff" stroke-width="3"/><circle cx="2378.200" cy="1290.200" r="6.400" fill="none" stroke="#fff" stroke-width="3"/><circle cx="2386.200" cy="1282.200" r="1.800" fill="#fff"/>
<path d="M2451.800 1281.500c-1.100.5-2.300.8-3.500 1 1.300-.8 2.200-2 2.700-3.400-1.200.7-2.500 1.200-3.900 1.500a6.100 6.100 0 0 0-10.500 5.600c-5.100-.3-9.600-2.700-12.600-6.400a6.100 6.100 0 0 0 1.900 8.200c-1 0-2-.3-2.800-.8v.1c0 3 2.100 5.500 4.900 6-.9.300-1.900.3-2.800.1a6.100 6.100 0 0 0 5.700 4.300 12.300 12.300 0 0 1-9.100 2.500 17.400 17.400 0 0 0 9.400 2.800c11.300 0 17.500-9.400 17.500-17.500v-.8c1.200-.9 2.200-2 3.100-3.200z" fill="#fff"/>
<circle cx="2496.400" cy="1290.500" r="15.400" fill="#fff"/><path d="M2498.600 1306v-11.300h3.600l.6-4.300h-4.200v-2.700c0-1.200.4-2.100 2.100-2.100h2.300v-3.800c-.4-.1-1.800-.2-3.300-.2-3.300 0-5.500 2-5.500 5.700v3.100h-3.700v4.300h3.700v11.300z" fill="#1f3e9b"/>
</svg>
</div>

<div id="scroll" class="abs"></div><div id="thumb" class="abs"></div>
<svg class="abs" style="left:2480px;top:0" width="72" height="1314" viewBox="2480 0 72 1314">
<path d="M2540.400 14.200 2544.700 8l4.300 6.200z" fill="#8a8a8a"/>
<path d="M2540.400 1299.800 2544.700 1306l4.300-6.200z" fill="#8a8a8a"/>
<defs><linearGradient id="fb" x1="0" y1="0" x2="0" y2="1"><stop offset="0" stop-color="#8298f2"/><stop offset="1" stop-color="#aebcfb"/></linearGradient>
<linearGradient id="tg" x1="0" y1="0" x2="0" y2="1"><stop offset="0" stop-color="#12d3a0"/><stop offset="1" stop-color="#1e9ff5"/></linearGradient></defs>
<circle cx="2526" cy="621.500" r="20.200" fill="#0b0b0d"/>
<circle cx="2526" cy="621.500" r="14.600" fill="url(#fb)"/>
<path d="M2531.600 620a6.400 6.400 0 1 0-2.200 6.600a3 3 0 0 1-.2-5.600a3 3 0 0 1 2.400-1z" fill="#0b0b0d"/>
<rect x="2543.500" y="772" width="12" height="62" rx="4" fill="#f0f1f4"/>
<rect x="2546.300" y="801.300" width="10" height="25.600" rx="3" fill="url(#tg)"/>
<path d="M2552 0v9a9 9 0 0 0-9-9z" fill="#20242c"/>
<path d="M2552 1314v-11a11 11 0 0 1-11 11z" fill="#20242c"/>
</svg>

</body></html>
